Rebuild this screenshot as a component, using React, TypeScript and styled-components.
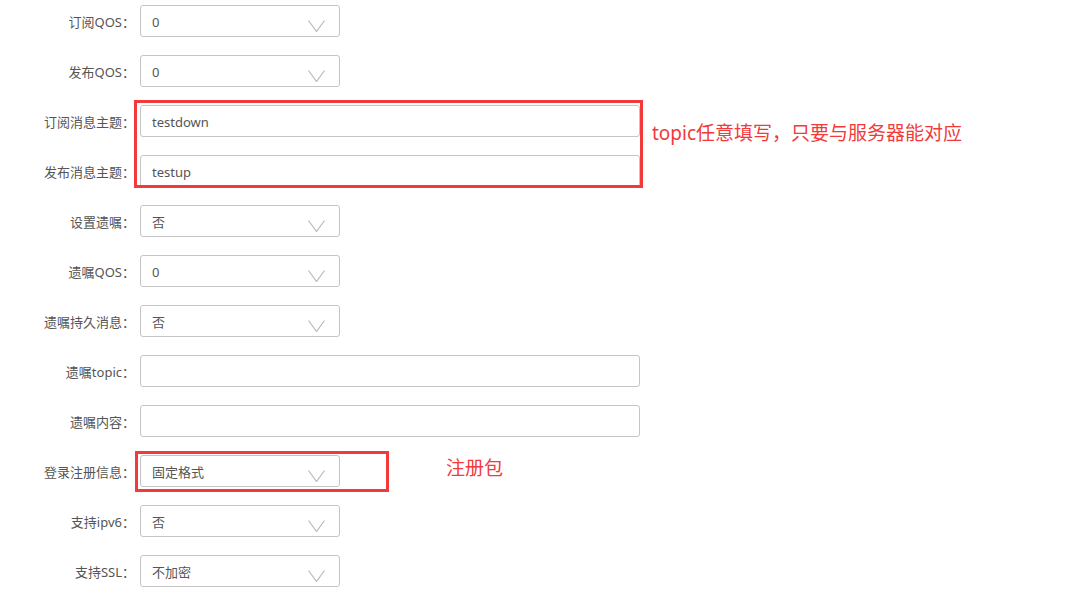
import React from "react";
import styled, { createGlobalStyle } from "styled-components";

const Global = createGlobalStyle`
  html, body { margin: 0; padding: 0; background: #fff; }
  body { font-family: "Noto Sans", "Noto Sans CJK SC", sans-serif; }
`;

const Page = styled.div`
  position: relative;
  width: 1072px;
  height: 595px;
  padding-top: 5px;
  box-sizing: border-box;
  overflow: hidden;
`;

const Form = styled.div`
  display: flex;
  flex-direction: column;
  gap: 18px;
`;

const Row = styled.div`
  display: grid;
  grid-template-columns: 135px auto;
  column-gap: 5px;
  align-items: center;
  height: 32px;
`;

const Label = styled.label`
  text-align: right;
  font-size: 13px;
  color: #555;
  white-space: nowrap;
  font-family: "Noto Sans", "Noto Sans CJK SC", sans-serif;
`;

const Box = styled.div<{ $wide?: boolean }>`
  box-sizing: border-box;
  width: ${(p) => (p.$wide ? "500px" : "200px")};
  height: 32px;
  border: 1px solid #c4c4c4;
  border-radius: 3px;
  display: flex;
  align-items: center;
  justify-content: space-between;
  padding: 1px 14px 0 11px;
  font-size: 13px;
  color: #555;
  background: #fff;
`;

const Chevron = styled.svg`
  width: 17px;
  height: 12px;
  margin-top: 8px;
  flex: none;
`;

const RedFrame = styled.div<{ $l: number; $t: number; $w: number; $h: number }>`
  position: absolute;
  left: ${(p) => p.$l}px;
  top: ${(p) => p.$t}px;
  width: ${(p) => p.$w}px;
  height: ${(p) => p.$h}px;
  box-sizing: border-box;
  border: 3px solid #f23a3a;
  pointer-events: none;
`;

const Note = styled.div<{ $l: number; $t: number }>`
  position: absolute;
  left: ${(p) => p.$l}px;
  top: ${(p) => p.$t}px;
  font-size: 19px;
  line-height: 24px;
  color: #f23a3a;
  white-space: nowrap;
  font-family: "Noto Sans", "Noto Sans CJK SC", sans-serif;
`;

type Field = { label: string; value: string; kind: "select" | "input" };

const fields: Field[] = [
  { label: "订阅QOS：", value: "0", kind: "select" },
  { label: "发布QOS：", value: "0", kind: "select" },
  { label: "订阅消息主题：", value: "testdown", kind: "input" },
  { label: "发布消息主题：", value: "testup", kind: "input" },
  { label: "设置遗嘱：", value: "否", kind: "select" },
  { label: "遗嘱QOS：", value: "0", kind: "select" },
  { label: "遗嘱持久消息：", value: "否", kind: "select" },
  { label: "遗嘱topic：", value: "", kind: "input" },
  { label: "遗嘱内容：", value: "", kind: "input" },
  { label: "登录注册信息：", value: "固定格式", kind: "select" },
  { label: "支持ipv6：", value: "否", kind: "select" },
  { label: "支持SSL：", value: "不加密", kind: "select" },
];

const Arrow = () => (
  <Chevron viewBox="0 0 17 12">
    <polyline points="0.5,0.5 8.5,11.5 16.5,0.5" fill="none" stroke="#b9b9b9" strokeWidth="1.2" />
  </Chevron>
);

export default function App() {
  return (
    <Page>
      <Global />
      <Form>
        {fields.map((f, i) => (
          <Row key={i}>
            <Label>{f.label}</Label>
            <Box $wide={f.kind === "input"}>
              <span>{f.value}</span>
              {f.kind === "select" && <Arrow />}
            </Box>
          </Row>
        ))}
      </Form>
      <RedFrame $l={134} $t={100} $w={509} $h={88} />
      <Note $l={652} $t={121}>topic任意填写，只要与服务器能对应</Note>
      <RedFrame $l={135} $t={451} $w={254} $h={41} />
      <Note $l={446} $t={456}>注册包</Note>
    </Page>
  );
}
